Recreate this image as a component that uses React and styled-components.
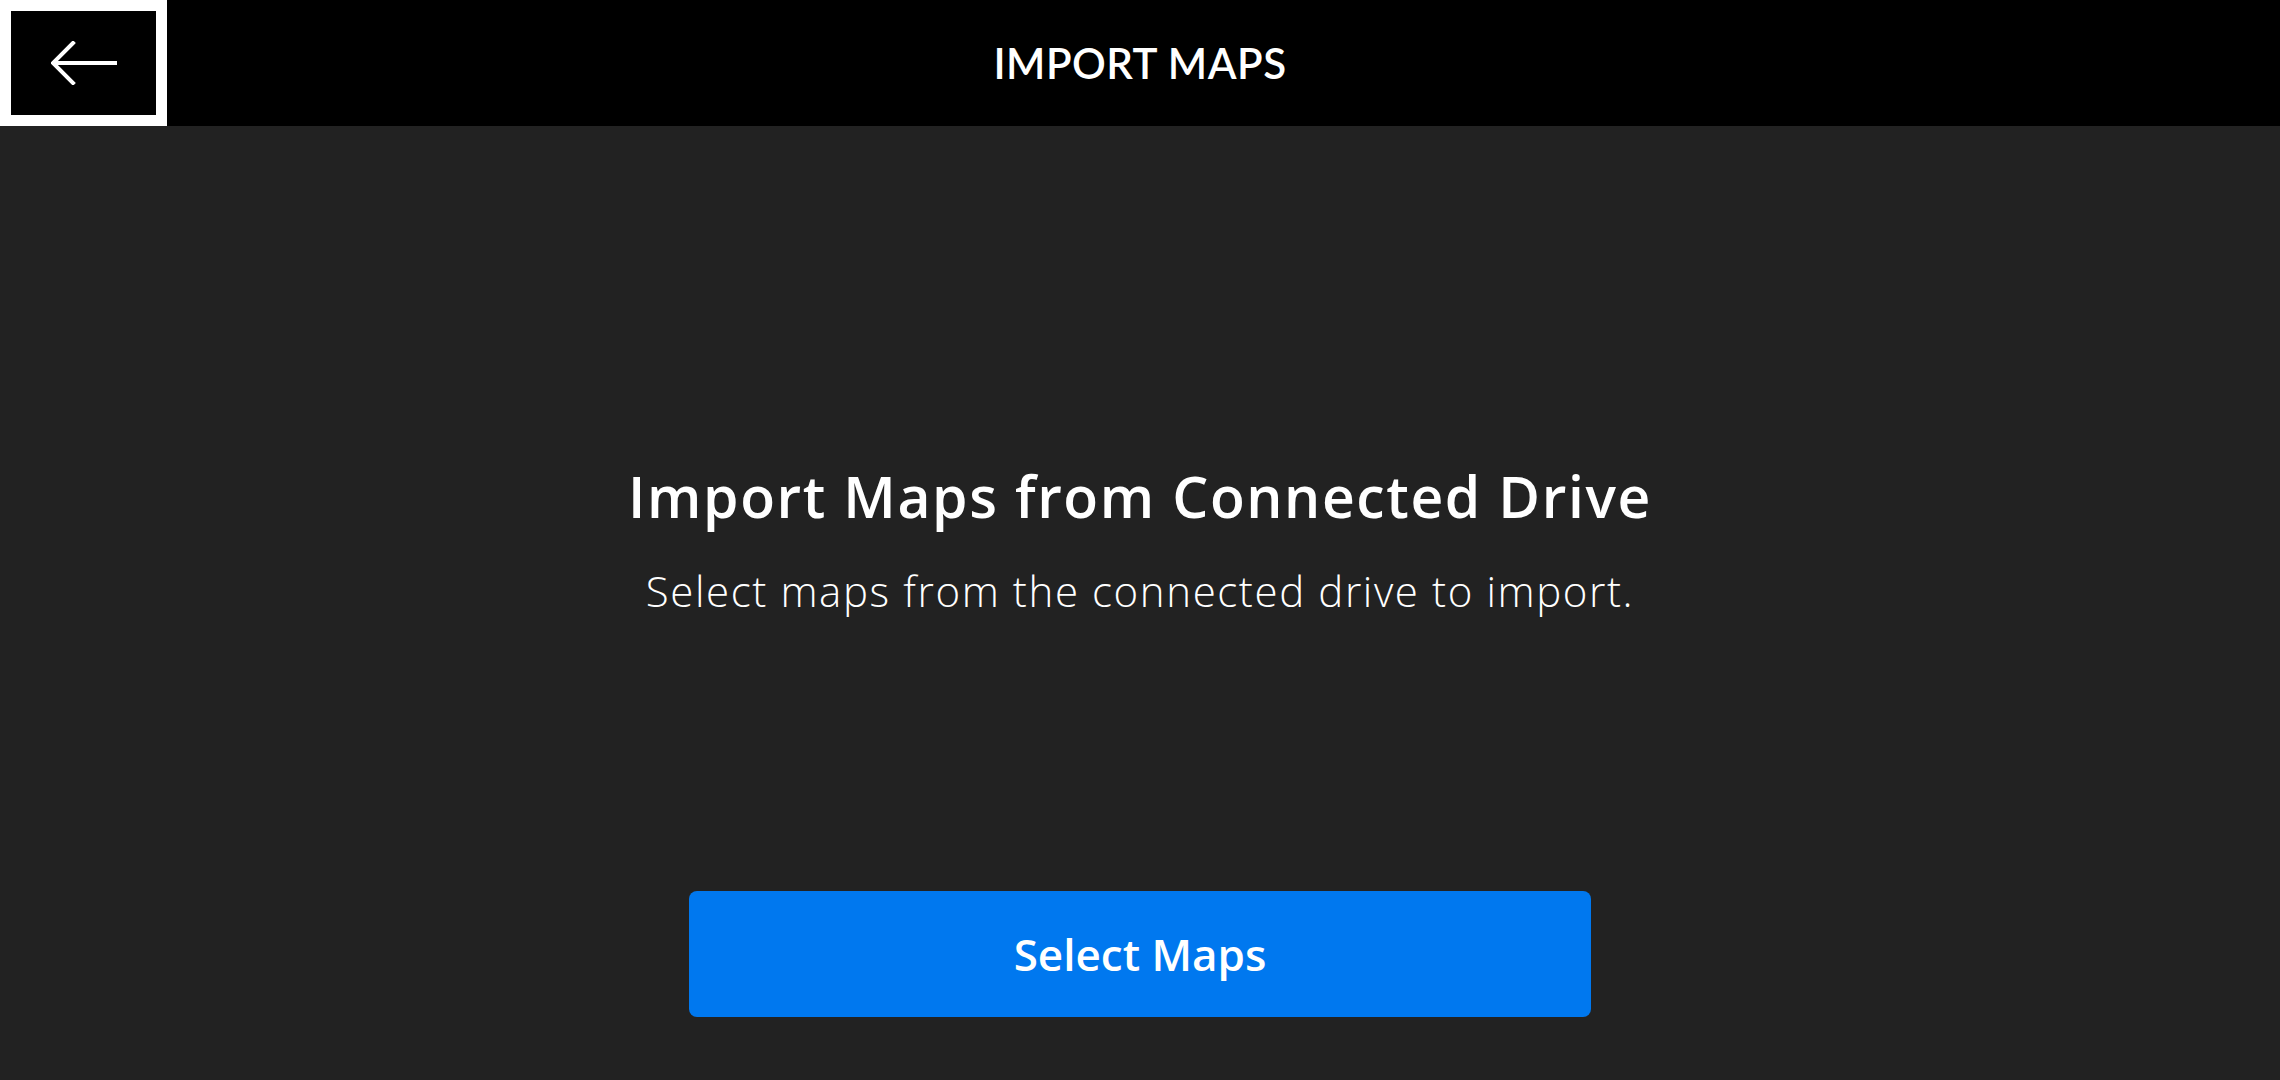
import React from 'react';
import styled, { createGlobalStyle } from 'styled-components';

const GlobalStyle = createGlobalStyle`
  html, body {
    margin: 0;
    padding: 0;
    background: #222222;
  }
  body {
    font-family: Lato, "Noto Sans", sans-serif;
    color: #ffffff;
  }
`;

const Screen = styled.div`
  width: 2280px;
  height: 1080px;
  display: flex;
  flex-direction: column;
  background: #222222;
  overflow: hidden;
`;

const Header = styled.header`
  height: 126px;
  flex-shrink: 0;
  background: #000000;
  display: grid;
  grid-template-columns: 167px 1fr 167px;
  align-items: center;
`;

const BackButton = styled.button`
  width: 167px;
  height: 126px;
  box-sizing: border-box;
  border: 11px solid #ffffff;
  background: #000000;
  display: flex;
  align-items: center;
  justify-content: center;
  padding: 0;
  cursor: pointer;
`;

const Title = styled.h1`
  margin: 0;
  text-align: center;
  font-size: 42px;
  font-weight: 600;
  letter-spacing: 0.5px;
`;

const Main = styled.main`
  flex: 1;
  display: flex;
  flex-direction: column;
  align-items: center;
  padding-top: 337px;
  font-family: "Open Sans", Lato, sans-serif;
`;

const Heading = styled.h2`
  margin: 0;
  font-size: 57px;
  font-weight: 600;
  line-height: 66px;
  letter-spacing: 1.6px;
`;

const Subtext = styled.p`
  margin: 38px 0 0;
  font-size: 42px;
  font-weight: 300;
  line-height: 48px;
  letter-spacing: 1.6px;
`;

const PrimaryButton = styled.button`
  margin-top: auto;
  margin-bottom: 63px;
  width: 902px;
  height: 126px;
  border: none;
  border-radius: 8px;
  background: #0078ef;
  color: #ffffff;
  font-family: "Open Sans", Lato, sans-serif;
  font-size: 44px;
  font-weight: 600;
  cursor: pointer;
`;

const ArrowLeft = () => (
  <svg width="66" height="44" viewBox="0 0 66 44" fill="none">
    <path
      d="M64 22H3M22 2L2 22l20 20"
      stroke="#ffffff"
      strokeWidth="4"
      strokeLinecap="square"
    />
  </svg>
);

export default function App() {
  return (
    <>
      <GlobalStyle />
      <Screen>
        <Header>
          <BackButton aria-label="Back">
            <ArrowLeft />
          </BackButton>
          <Title>IMPORT MAPS</Title>
          <span />
        </Header>
        <Main>
          <Heading>Import Maps from Connected Drive</Heading>
          <Subtext>Select maps from the connected drive to import.</Subtext>
          <PrimaryButton>Select Maps</PrimaryButton>
        </Main>
      </Screen>
    </>
  );
}
